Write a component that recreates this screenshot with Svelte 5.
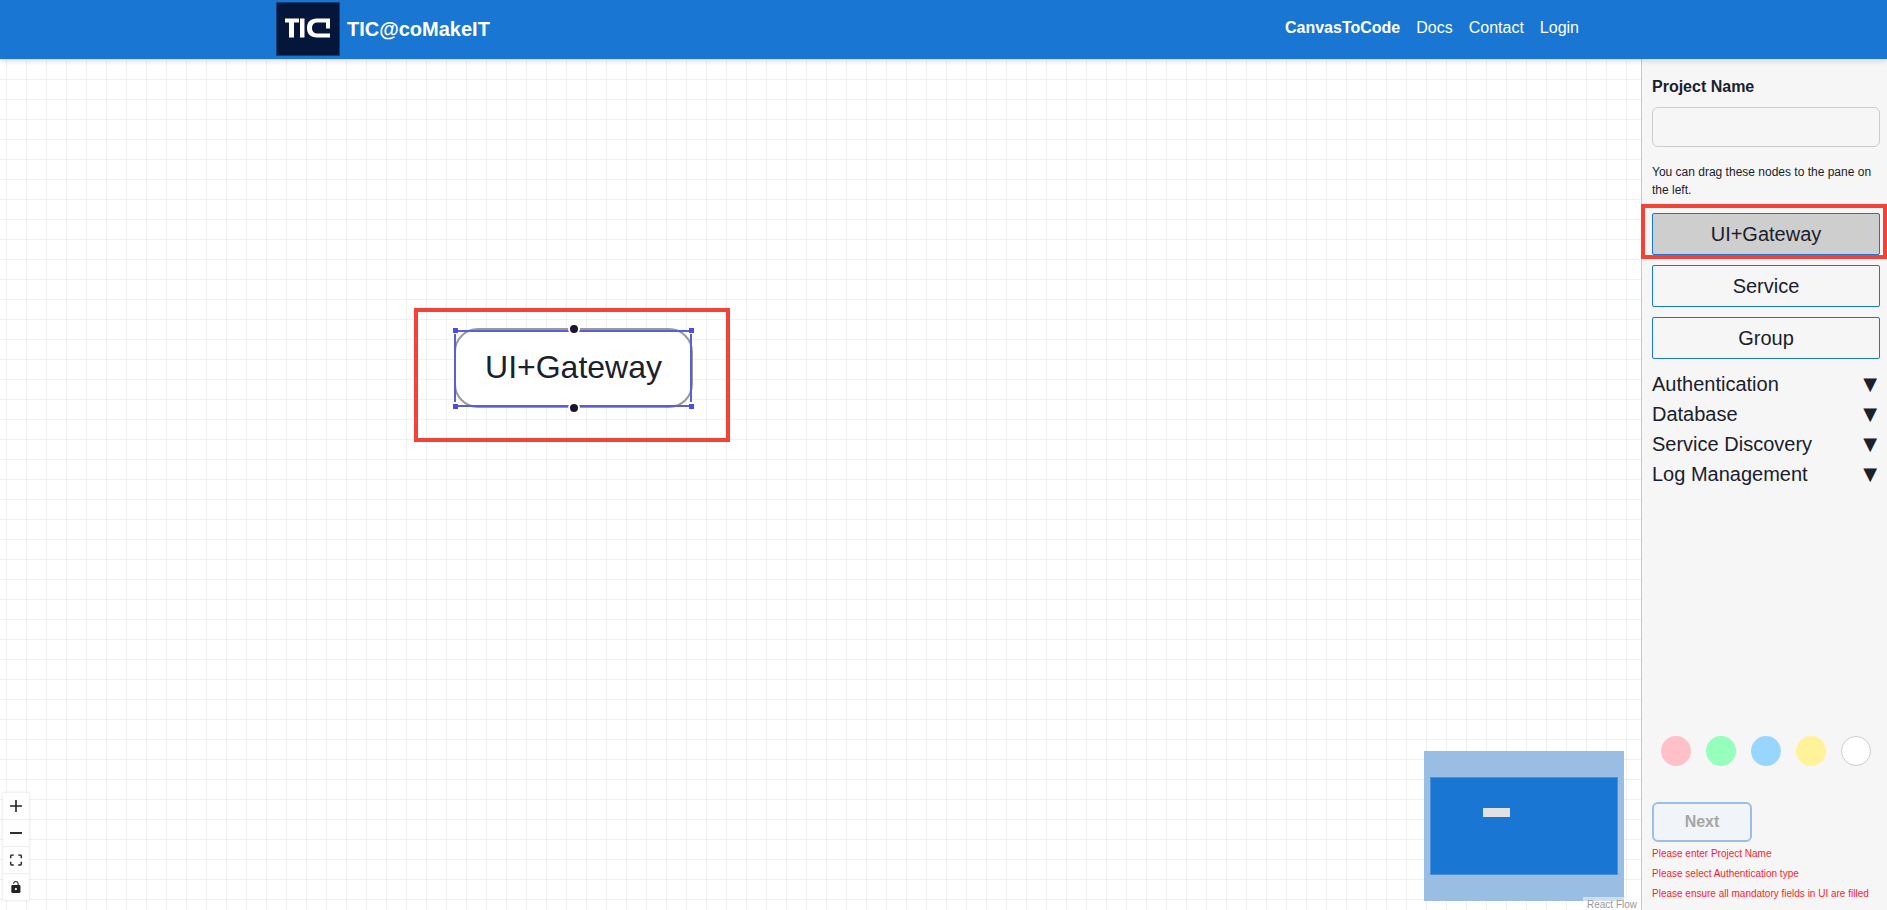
<script>
  let colors = ['#ffc0c7', '#95ffbb', '#99d6ff', '#fff39a', '#ffffff'];
  let nodes = ['Service', 'Group'];
  let sections = ['Authentication', 'Database', 'Service Discovery', 'Log Management'];
  let errors = [
    'Please enter Project Name',
    'Please select Authentication type',
    'Please ensure all mandatory fields in UI are filled'
  ];
</script>

<div class="page">
  <header>
    <div class="brand">
      <svg class="logo" viewBox="0 0 64 54" width="64" height="54">
        <rect x="0.5" y="0.5" width="63" height="53" fill="#04173a" stroke="#0d3f78" />
        <g fill="#fff">
          <path d="M9 16.500h14v4h-5v15h-5v-15H9z" />
          <path d="M24 16.500h4.500v19H24z" />
          <path d="M54 16.500v10h-4v-6h-8c-4 0-6 2-6 5.500s2 5.500 6 5.500h12v4H41c-6.500 0-10-3.500-10-9.500s3.500-9.500 10-9.500z" />
        </g>
      </svg>
      <span class="title">TIC@coMakeIT</span>
    </div>
    <nav>
      <a href="#top" class="active">CanvasToCode</a>
      <a href="#top">Docs</a>
      <a href="#top">Contact</a>
      <a href="#top">Login</a>
    </nav>
  </header>

  <main>
    <section class="canvas">
      <div class="highlight"></div>
      <div class="node">
        <span class="edge top"></span>
        <span class="edge bottom"></span>
        <span class="edge left"></span>
        <span class="edge right"></span>
        <span class="corner tl"></span>
        <span class="corner tr"></span>
        <span class="corner bl"></span>
        <span class="corner br"></span>
        <span class="handle ht"></span>
        <span class="handle hb"></span>
        UI+Gateway
      </div>

      <div class="controls">
        <button aria-label="zoom in">
          <svg viewBox="0 0 32 32" width="12" height="12"><path d="M32 18.133H18.133V32h-4.266V18.133H0v-4.266h13.867V0h4.266v13.867H32z" /></svg>
        </button>
        <button aria-label="zoom out">
          <svg viewBox="0 0 32 5" width="12" height="2"><path d="M0 0h32v5H0z" /></svg>
        </button>
        <button aria-label="fit view">
          <svg viewBox="0 0 32 30" width="12" height="12"><path d="M3.692 4.630c0-.53.430-.938.938-.938h5.380V0H4.630A4.620 4.620 0 0 0 0 4.630v5.380h3.692V4.630zM27.354 0h-5.380v3.692h5.380c.53 0 .950.410.950.938v5.380h3.692V4.630A4.620 4.620 0 0 0 27.354 0zM28.308 25.370c0 .53-.430.938-.950.938h-5.380V30h5.380A4.620 4.620 0 0 0 32 25.370v-5.380h-3.692v5.380zM4.630 26.308c-.530 0-.938-.408-.938-.938v-5.380H0v5.380A4.620 4.620 0 0 0 4.630 30h5.380v-3.692H4.630z" /></svg>
        </button>
        <button aria-label="lock">
          <svg viewBox="0 0 25 32" width="10" height="12"><path d="M21.333 10.667H19.810V7.619C19.810 3.429 16.380 0 12.190 0c-4.190 0-7.620 3.429-7.620 7.619h2.900c0-2.600 2.120-4.720 4.720-4.720 2.600 0 4.720 2.120 4.720 4.720v3.048H3.048A3.056 3.056 0 0 0 0 13.714v15.238A3.056 3.056 0 0 0 3.048 32h18.285a3.056 3.056 0 0 0 3.048-3.048V13.714a3.056 3.056 0 0 0-3.048-3.047zM12.190 24.533a3.056 3.056 0 0 1-3.047-3.048 3.056 3.056 0 0 1 3.047-3.047 3.056 3.056 0 0 1 3.048 3.047 3.056 3.056 0 0 1-3.048 3.048z" /></svg>
        </button>
      </div>

      <div class="minimap">
        <div class="mini-view"></div>
        <div class="mini-node"></div>
      </div>
      <div class="attribution">React Flow</div>
    </section>

    <aside>
      <label for="project">Project Name</label>
      <input id="project" type="text" />
      <p class="hint">You can drag these nodes to the pane on the left.</p>

      <div class="picked">
        <div class="tile selected">UI+Gateway</div>
      </div>
      {#each nodes as name}
        <div class="tile">{name}</div>
      {/each}

      <ul class="sections">
        {#each sections as name}
          <li><span>{name}</span><span class="arrow">▼</span></li>
        {/each}
      </ul>

      <div class="swatches">
        {#each colors as c}
          <span class="swatch" class:blank={c === '#ffffff'} style="background: {c}"></span>
        {/each}
      </div>

      <button class="next" disabled>Next</button>
      {#each errors as msg}
        <p class="error">{msg}</p>
      {/each}
    </aside>
  </main>
</div>

<style>
  :global(body) {
    margin: 0;
    overflow: hidden;
    font-family: "Liberation Sans", Arial, sans-serif;
    color: #1a202c;
  }
  .page {
    display: flex;
    flex-direction: column;
    height: 910px;
  }
  header {
    height: 59px;
    flex: none;
    background: #1976d2;
    display: flex;
    align-items: center;
    justify-content: space-between;
    padding: 0 308px 0 276px;
    color: #fff;
    position: relative;
    z-index: 2;
    box-shadow: 0 2px 5px rgba(0, 0, 0, 0.14);
  }
  .brand {
    display: flex;
    align-items: center;
    gap: 7px;
  }
  .logo {
    display: block;
    margin-top: -2px;
  }
  .title {
    font-size: 20px;
    font-weight: 700;
    padding-bottom: 1px;
  }
  nav {
    display: flex;
    gap: 16px;
    font-size: 16px;
    padding-bottom: 3px;
  }
  nav a {
    color: #fff;
    text-decoration: none;
  }
  nav a.active {
    font-weight: 700;
  }
  main {
    flex: 1;
    display: flex;
    min-height: 0;
  }
  .canvas {
    flex: 1;
    position: relative;
    overflow: hidden;
    background-color: #fff;
    background-image:
      linear-gradient(#f0f0f0 1px, transparent 1px),
      linear-gradient(90deg, #f0f0f0 1px, transparent 1px);
    background-size: 20px 20px;
    background-position: 6px 0;
  }
  .highlight {
    position: absolute;
    left: 414px;
    top: 249px;
    width: 308px;
    height: 126px;
    border: 4px solid #f44336;
  }
  .node {
    position: absolute;
    left: 454px;
    top: 269px;
    width: 239px;
    height: 80px;
    box-sizing: border-box;
    border: 2px solid #9a9a9a;
    border-radius: 24px;
    background: #fff;
    display: flex;
    align-items: center;
    justify-content: center;
    font-size: 32px;
    padding-bottom: 2px;
  }
  .edge {
    position: absolute;
    background: #5a5fd6;
  }
  .edge.top, .edge.bottom {
    left: 2px;
    right: 2px;
    height: 2px;
  }
  .edge.top { top: 0; }
  .edge.bottom { bottom: -1px; }
  .edge.left, .edge.right {
    top: 4px;
    bottom: 4px;
    width: 2px;
  }
  .edge.left { left: -2px; }
  .edge.right { right: -1px; }
  .corner {
    position: absolute;
    width: 5px;
    height: 5px;
    background: #4a4fe0;
  }
  .tl { left: -3px; top: -2px; }
  .tr { right: -3px; top: -2px; }
  .bl { left: -3px; bottom: -3px; }
  .br { right: -3px; bottom: -3px; }
  .handle {
    position: absolute;
    left: 50%;
    width: 8px;
    height: 8px;
    margin-left: -6px;
    border-radius: 50%;
    background: #1a1433;
    border: 2px solid #fff;
  }
  .ht { top: -7px; }
  .hb { bottom: -8px; }
  .controls {
    position: absolute;
    left: 3px;
    top: 734px;
    width: 26px;
    box-shadow: 0 0 2px 1px rgba(0, 0, 0, 0.08);
  }
  .controls button {
    display: flex;
    align-items: center;
    justify-content: center;
    width: 26px;
    height: 27px;
    padding: 0;
    background: #fefefe;
    border: none;
    border-bottom: 1px solid #eee;
    box-sizing: border-box;
  }
  .controls button:last-child {
    height: 26px;
    border-bottom: none;
  }
  .controls svg {
    fill: #222;
  }
  .minimap {
    position: absolute;
    left: 1424px;
    top: 692px;
    width: 200px;
    height: 150px;
    background: #9abde3;
  }
  .mini-view {
    position: absolute;
    left: 6px;
    top: 26px;
    width: 188px;
    height: 98px;
    box-sizing: border-box;
    background: #1976d2;
    border: 1px solid #4a90d9;
  }
  .mini-node {
    position: absolute;
    left: 59px;
    top: 57px;
    width: 27px;
    height: 9px;
    background: #e2e2e2;
  }
  .attribution {
    position: absolute;
    right: 0;
    bottom: 0;
    padding: 2px 4px 0;
    height: 11px;
    line-height: 11px;
    font-size: 10px;
    color: #999;
    background: rgba(255, 255, 255, 0.5);
  }
  aside {
    width: 246px;
    flex: none;
    box-sizing: border-box;
    background: #f6f6f6;
    border-left: 1px solid #c8c8c8;
    padding: 19px 7px 0 10px;
    display: flex;
    flex-direction: column;
    position: relative;
    z-index: 1;
  }
  aside > * {
    flex: none;
  }
  label {
    font-size: 16px;
    font-weight: 700;
    line-height: 18px;
  }
  input {
    margin-top: 11px;
    height: 40px;
    box-sizing: border-box;
    background: #f6f6f6;
    border: 1px solid #ccc;
    border-radius: 6px;
  }
  .hint {
    margin: 16px 0 0;
    font-size: 12px;
    line-height: 18px;
  }
  .picked {
    margin: 5px -7px 0 -11px;
    padding: 5px 3px 0 7px;
    height: 55px;
    box-sizing: border-box;
    border: 4px solid #f44336;
  }
  .tile {
    height: 42px;
    box-sizing: border-box;
    border: 1px solid #1976d2;
    border-radius: 2px;
    display: flex;
    align-items: center;
    justify-content: center;
    font-size: 20px;
    margin-top: 10px;
  }
  .picked .tile {
    margin: 0;
  }
  .picked + .tile {
    margin-top: 6px;
  }
  .selected {
    background: #cecece;
  }
  .sections {
    list-style: none;
    margin: 10px 0 0;
    padding: 0;
  }
  .sections li {
    display: flex;
    justify-content: space-between;
    font-size: 20px;
    line-height: 30px;
    height: 30px;
    padding-right: 3px;
  }
  .arrow {
    font-size: 18px;
    font-family: "DejaVu Sans", sans-serif;
  }
  .swatches {
    margin-top: 247px;
    padding-left: 9px;
    display: flex;
    gap: 15px;
  }
  .swatch {
    width: 30px;
    height: 30px;
    box-sizing: border-box;
    border-radius: 50%;
  }
  .swatch.blank {
    border: 1px solid #ccc;
  }
  .next {
    margin-top: 36px;
    width: 100px;
    height: 40px;
    box-sizing: border-box;
    background: #f1f4f8;
    border: 2px solid #9bbfe3;
    border-radius: 6px;
    font: 700 16px "Liberation Sans", Arial, sans-serif;
    color: #a6a6a6;
  }
  .error {
    margin: 0;
    font-size: 10px;
    line-height: 20px;
    color: #ff1a2e;
  }
  .next + .error {
    margin-top: 2px;
  }
</style>
